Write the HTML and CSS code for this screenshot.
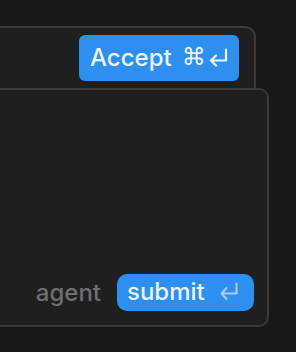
FILE: index.html
```html
<!DOCTYPE html>
<html>
<head>
<meta charset="utf-8">
<link rel="stylesheet" href="styles.css">
</head>
<body>
<div class="stage">
  <div class="panel-top">
    <button class="btn btn-accept">
      <span class="label">Accept</span>
      <span class="cmd">⌘</span>
      <svg class="ret" viewBox="0 0 19 19" width="19" height="19"><path d="M17 1.5 V12.5 H2 M7 7.5 L2 12.5 L7 17.5" fill="none" stroke="currentColor" stroke-width="2.2" stroke-linecap="round" stroke-linejoin="round"/></svg>
    </button>
  </div>
  <div class="panel-bottom">
    <div class="footer">
      <span class="mode">agent</span>
      <button class="btn btn-submit">
        <span class="label">submit</span>
        <svg class="ret ret-dim" viewBox="0 0 19 19" width="20" height="19"><path d="M17 1.5 V11.5 H2 M7 6 L2 11.5 L7 17" fill="none" stroke="currentColor" stroke-width="2" stroke-linecap="round" stroke-linejoin="round"/></svg>
      </button>
    </div>
  </div>
</div>
</body>
</html>
```

FILE: styles.css
```css
html, body {
  margin: 0;
  padding: 0;
  background: #181818;
  width: 296px;
  height: 352px;
  overflow: hidden;
  font-family: Inter, "Noto Sans", sans-serif;
}

.stage {
  padding-top: 26px;
  margin-left: -20px;
}

.panel-top {
  width: 276px;
  height: 62px;
  box-sizing: border-box;
  border: 2px solid #3a3a3a;
  border-bottom: none;
  border-top-right-radius: 11px;
  background: #1f1f1f;
  display: flex;
  justify-content: flex-end;
  align-items: flex-start;
  padding: 7px 15px 0 0;
}

.panel-bottom {
  width: 289px;
  height: 239px;
  box-sizing: border-box;
  border: 2px solid #3a3a3a;
  border-top-right-radius: 10px;
  border-bottom-right-radius: 10px;
  background: #1f1f1f;
  display: flex;
  flex-direction: column;
  justify-content: flex-end;
  padding: 0 13px 14px 0;
}

.footer {
  display: flex;
  justify-content: flex-end;
  align-items: center;
  gap: 16px;
}

.mode {
  color: #6f6f6f;
  font-size: 24px;
  font-weight: 500;
  line-height: 28px;
}

.btn {
  border: none;
  margin: 0;
  background: #2d8ff0;
  color: #eef4fd;
  font-family: Inter, "Noto Sans", sans-serif;
  font-size: 24px;
  font-weight: 500;
  display: flex;
  align-items: center;
  box-sizing: border-box;
}

.btn-accept {
  height: 46px;
  width: 160px;
  border-radius: 6px;
  padding: 0 0 2px 11px;
}

.btn-accept .cmd {
  font-family: "DejaVu Sans", sans-serif;
  font-size: 24px;
  margin-left: 10px;
}

.btn-accept .ret {
  margin-left: 3px;
}

.btn-submit {
  height: 37px;
  width: 137px;
  border-radius: 10px;
  padding: 0 0 2px 10px;
}

.ret-dim {
  color: #a9cdf6;
  margin-left: 14px;
}
```
